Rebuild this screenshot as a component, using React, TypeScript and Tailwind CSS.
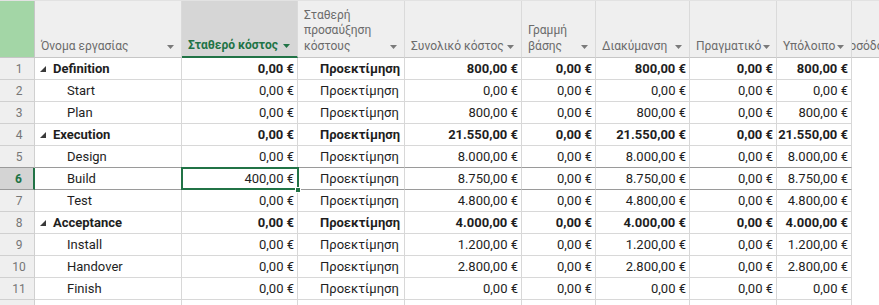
import React from "react";

const W = [147, 116, 107, 117, 74, 94, 87, 75, 27];

type Row = {
  n: number;
  name: string;
  summary?: boolean;
  fixed: string;
  total: string;
  base: string;
  vari: string;
  actual: string;
  rem: string;
};

const rows: Row[] = [
  { n: 1, name: "Definition", summary: true, fixed: "0,00 €", total: "800,00 €", base: "0,00 €", vari: "800,00 €", actual: "0,00 €", rem: "800,00 €" },
  { n: 2, name: "Start", fixed: "0,00 €", total: "0,00 €", base: "0,00 €", vari: "0,00 €", actual: "0,00 €", rem: "0,00 €" },
  { n: 3, name: "Plan", fixed: "0,00 €", total: "800,00 €", base: "0,00 €", vari: "800,00 €", actual: "0,00 €", rem: "800,00 €" },
  { n: 4, name: "Execution", summary: true, fixed: "0,00 €", total: "21.550,00 €", base: "0,00 €", vari: "21.550,00 €", actual: "0,00 €", rem: "21.550,00 €" },
  { n: 5, name: "Design", fixed: "0,00 €", total: "8.000,00 €", base: "0,00 €", vari: "8.000,00 €", actual: "0,00 €", rem: "8.000,00 €" },
  { n: 6, name: "Build", fixed: "400,00 €", total: "8.750,00 €", base: "0,00 €", vari: "8.750,00 €", actual: "0,00 €", rem: "8.750,00 €" },
  { n: 7, name: "Test", fixed: "0,00 €", total: "4.800,00 €", base: "0,00 €", vari: "4.800,00 €", actual: "0,00 €", rem: "4.800,00 €" },
  { n: 8, name: "Acceptance", summary: true, fixed: "0,00 €", total: "4.000,00 €", base: "0,00 €", vari: "4.000,00 €", actual: "0,00 €", rem: "4.000,00 €" },
  { n: 9, name: "Install", fixed: "0,00 €", total: "1.200,00 €", base: "0,00 €", vari: "1.200,00 €", actual: "0,00 €", rem: "1.200,00 €" },
  { n: 10, name: "Handover", fixed: "0,00 €", total: "2.800,00 €", base: "0,00 €", vari: "2.800,00 €", actual: "0,00 €", rem: "2.800,00 €" },
  { n: 11, name: "Finish", fixed: "0,00 €", total: "0,00 €", base: "0,00 €", vari: "0,00 €", actual: "0,00 €", rem: "0,00 €" },
];

function Arrow({ green }: { green?: boolean }) {
  return (
    <svg width="7" height="4" viewBox="0 0 7 4" className="shrink-0 mb-[5px] ml-[2px]">
      <polygon points="0,0 7,0 3.5,4" fill={green ? "#217346" : "#7a7a7a"} />
    </svg>
  );
}

function HeaderCell({
  w,
  children,
  selected,
}: {
  w: number;
  children: React.ReactNode;
  selected?: boolean;
}) {
  return (
    <div
      style={{ width: w }}
      className={
        "shrink-0 h-full flex items-end justify-between overflow-hidden pl-[6px] pr-[7px] pb-[3px] border-r border-[#dadada] " +
        (selected
          ? "bg-[#d6d6d6] border-b-2 border-b-[#217346] text-[#217346] font-bold"
          : "bg-[#efefef] border-b border-b-[#c6c6c6] text-[#6b6b6b]")
      }
    >
      <div className="leading-[15.5px] whitespace-nowrap">{children}</div>
      <Arrow green={selected} />
    </div>
  );
}

function Cell({
  w,
  children,
  align = "right",
  bold,
  dark,
  className = "",
}: {
  w: number;
  children?: React.ReactNode;
  align?: "right" | "left";
  bold?: boolean;
  dark?: boolean;
  className?: string;
}) {
  return (
    <div
      style={{ width: w }}
      className={
        "shrink-0 h-full flex items-center whitespace-nowrap border-r border-[#d8d8d8] " +
        (dark ? "border-b border-b-[#9a9a9a] " : "border-b border-b-[#d8d8d8] ") +
        (align === "right" ? "justify-end pr-[3px] " : "justify-start ") +
        (bold ? "font-bold " : "") +
        className
      }
    >
      {children}
    </div>
  );
}

export default function App() {
  return (
    <div
      className="w-[879px] h-[305px] overflow-hidden bg-white text-[#1e1e1e]"
      style={{ fontFamily: 'Roboto, "Noto Sans", sans-serif' }}
    >
      {/* header */}
      <div className="flex h-[58px] text-[12px] border-t border-[#e2e2e2]">
        <div className="w-[35px] shrink-0 h-full bg-[#a3d6a6] border-r border-[#c6c6c6] border-b border-b-[#c6c6c6]" />
        <HeaderCell w={W[0]}>Όνομα εργασίας</HeaderCell>
        <HeaderCell w={W[1]} selected>
          Σταθερό κόστος
        </HeaderCell>
        <HeaderCell w={W[2]}>
          Σταθερή
          <br />
          προσαύξηση
          <br />
          κόστους
        </HeaderCell>
        <HeaderCell w={W[3]}>Συνολικό κόστος</HeaderCell>
        <HeaderCell w={W[4]}>
          Γραμμή
          <br />
          βάσης
        </HeaderCell>
        <HeaderCell w={W[5]}>Διακύμανση</HeaderCell>
        <HeaderCell w={W[6]}>Πραγματικό</HeaderCell>
        <HeaderCell w={W[7]}>Υπόλοιπο</HeaderCell>
        <div
          style={{ width: W[8] }}
          className="shrink-0 h-full flex items-end overflow-hidden pb-[3px] bg-[#efefef] border-b border-b-[#c6c6c6] text-[#6b6b6b]"
        >
          <span className="leading-[15.5px] whitespace-nowrap ml-[-18px]">Προσόδου</span>
        </div>
      </div>

      {/* rows */}
      {[...rows, null].map((r, i) => {
        if (!r) {
          return (
            <div key="empty" className="flex h-[22px] text-[13px]">
              <div className="w-[35px] shrink-0 h-full bg-[#efefef] border-r border-[#d0d0d0]" />
              {W.slice(0, 8).map((w, k) => (
                <Cell key={k} w={w} />
              ))}
            </div>
          );
        }
        const sel = r.n === 6;
        const dark = r.n === 5 || r.n === 6;
        return (
          <div key={i} className="flex h-[22px] text-[13px]">
            <div
              className={
                "w-[35px] shrink-0 h-full flex items-center justify-center pl-[4px] text-[12px] border-b " +
                (sel
                  ? "bg-[#d4d4d4] text-[#217346] font-bold border-b-[#9a9a9a] border-r-2 border-r-[#217346]"
                  : dark
                  ? "bg-[#efefef] text-[#767676] border-b-[#9a9a9a] border-r border-r-[#d0d0d0]"
                  : "bg-[#efefef] text-[#767676] border-b-[#d0d0d0] border-r border-r-[#d0d0d0]")
              }
            >
              {r.n}
            </div>
            <Cell w={W[0]} align="left" bold={r.summary} dark={dark}>
              {r.summary ? (
                <span className="flex items-center pl-[5px]">
                  <svg width="6" height="6" viewBox="0 0 6 6" className="mr-[7px]">
                    <polygon points="6,0 6,6 0,6" fill="#3a3a3a" />
                  </svg>
                  {r.name}
                </span>
              ) : (
                <span className="pl-[32px]">{r.name}</span>
              )}
            </Cell>
            <Cell w={W[1]} bold={r.summary} dark={dark} className="relative">
              {r.fixed}
              {sel && (
                <>
                  <div className="absolute left-[-1px] top-[-1px] w-[118px] h-[23px] border-2 border-[#217346] pointer-events-none" />
                  <div className="absolute right-[-4px] bottom-[-4px] w-[6px] h-[6px] bg-[#217346] border border-white z-10" />
                </>
              )}
            </Cell>
            <Cell w={W[2]} align="left" bold={r.summary} dark={dark} className="pl-[22px] overflow-hidden">
              Προεκτίμηση
            </Cell>
            <Cell w={W[3]} bold={r.summary} dark={dark}>{r.total}</Cell>
            <Cell w={W[4]} bold={r.summary} dark={dark}>{r.base}</Cell>
            <Cell w={W[5]} bold={r.summary} dark={dark}>{r.vari}</Cell>
            <Cell w={W[6]} bold={r.summary} dark={dark}>{r.actual}</Cell>
            <Cell w={W[7]} bold={r.summary} dark={dark}>{r.rem}</Cell>
            <div style={{ width: W[8] }} className="shrink-0 h-full" />
          </div>
        );
      })}
    </div>
  );
}
